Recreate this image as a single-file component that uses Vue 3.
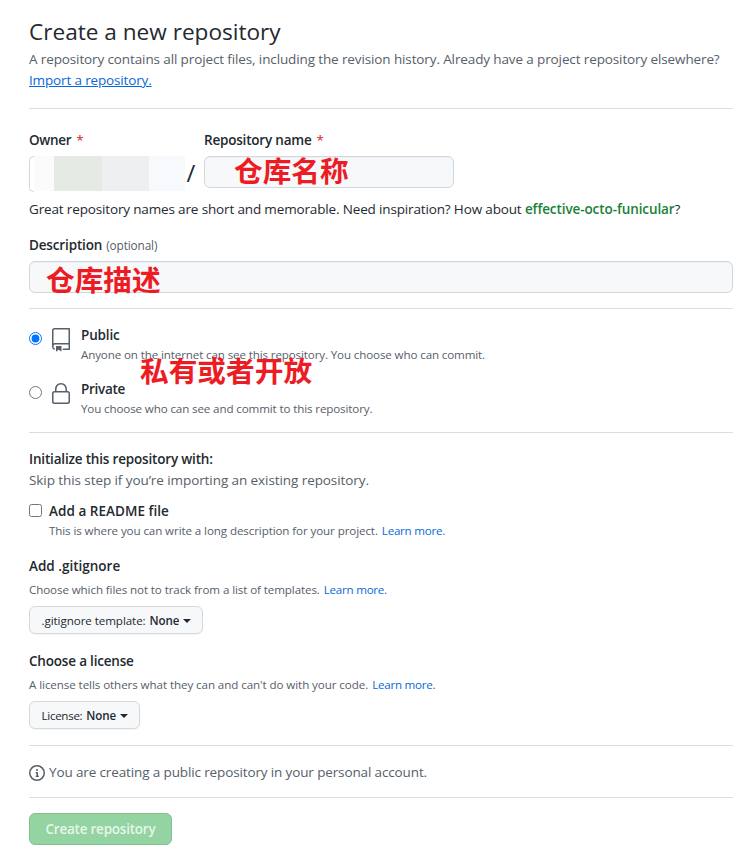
<script setup>
import { ref } from 'vue'

const visibility = ref('public')
const readme = ref(false)
</script>

<template>
  <main class="page">
    <header class="head">
      <h1><span class="t-title">Create a new repository</span></h1>
      <p class="muted"><span class="t-sub">A repository contains all project files, including the revision history. Already have a project repository elsewhere?</span></p>
      <p><a class="underlined t-import" href="#">Import a repository.</a></p>
    </header>

    <section class="names">
      <div class="owner">
        <label class="label"><span class="t-owner">Owner</span><i class="star">*</i></label>
        <div class="owner-box"><b class="m1"></b><b class="m2"></b><b class="m3"></b><b class="m4"></b></div>
      </div>
      <span class="slash">/</span>
      <div class="repo">
        <label class="label"><span class="t-repo">Repository name</span><i class="star">*</i></label>
        <div class="field"><span class="note note-name">仓库名称</span></div>
      </div>
    </section>
    <p class="hint"><span class="t-hint">Great repository names are short and memorable. Need inspiration? How about </span><strong class="green t-green">effective-octo-funicular</strong>?</p>

    <section class="description">
      <label class="label"><span class="t-desc">Description</span><small class="t-opt">(optional)</small></label>
      <div class="field"><span class="note note-desc">仓库描述</span></div>
    </section>

    <section class="visibility">
      <div class="choice">
        <input v-model="visibility" type="radio" value="public" />
        <svg class="icon" width="24" height="24" viewBox="0 0 24 24"><path fill-rule="evenodd" d="M3 2.75A2.75 2.75 0 015.75 0h14.5a.75.75 0 01.75.75v20.5a.75.75 0 01-.75.75h-6a.75.75 0 010-1.5h5.25v-4H6A1.5 1.5 0 004.5 18v.75c0 .716.43 1.334 1.05 1.605a.75.75 0 01-.6 1.374A3.25 3.25 0 013 18.75v-16zM19.5 1.5V15H6c-.546 0-1.059.146-1.5.401V2.75c0-.69.56-1.25 1.25-1.25H19.5z" /><path d="M7 18.25a.25.25 0 01.25-.25h5a.25.25 0 01.25.25v5.01a.25.25 0 01-.397.201l-2.206-1.604a.25.25 0 00-.294 0L7.397 23.46a.25.25 0 01-.397-.2v-5.01z" /></svg>
        <div>
          <div class="label"><span class="t-public">Public</span></div>
          <div class="small"><span class="t-anyone">Anyone on the internet can see this repository. You choose who can commit.</span></div>
        </div>
        <span class="note note-visibility">私有或者开放</span>
      </div>
      <div class="choice">
        <input v-model="visibility" type="radio" value="private" />
        <svg class="icon" width="24" height="24" viewBox="0 0 24 24"><path fill-rule="evenodd" d="M6 9V7.25C6 3.845 8.503 1 12 1s6 2.845 6 6.25V9h.5a2.5 2.5 0 012.5 2.5v8a2.5 2.5 0 01-2.5 2.5h-13A2.5 2.5 0 013 19.5v-8A2.5 2.5 0 015.5 9H6zm1.5-1.75C7.5 4.58 9.422 2.5 12 2.5c2.578 0 4.5 2.08 4.5 4.75V9h-9V7.25zm-3 4.25a1 1 0 011-1h13a1 1 0 011 1v8a1 1 0 01-1 1h-13a1 1 0 01-1-1v-8z" /></svg>
        <div>
          <div class="label"><span class="t-private">Private</span></div>
          <div class="small"><span class="t-choose">You choose who can see and commit to this repository.</span></div>
        </div>
      </div>
    </section>

    <section class="init">
      <div class="label"><span class="t-init">Initialize this repository with:</span></div>
      <p class="muted"><span class="t-skip">Skip this step if you’re importing an existing repository.</span></p>
      <div class="readme">
        <input v-model="readme" type="checkbox" />
        <div>
          <div class="label"><span class="t-readme">Add a README file</span></div>
          <div class="small"><span class="t-where">This is where you can write a long description for your project.</span><a class="learn" href="#">Learn more.</a></div>
        </div>
      </div>
      <div class="label group"><span class="t-git">Add .gitignore</span></div>
      <div class="small"><span class="t-which">Choose which files not to track from a list of templates.</span><a class="learn" href="#">Learn more.</a></div>
      <button class="select select-git"><span class="t-template">.gitignore template:</span><strong>None</strong><i class="caret"></i></button>
      <div class="label group"><span class="t-lic">Choose a license</span></div>
      <div class="small"><span class="t-tells">A license tells others what they can and can't do with your code.</span><a class="learn" href="#">Learn more.</a></div>
      <button class="select select-lic"><span class="t-license">License:</span><strong>None</strong><i class="caret"></i></button>
    </section>

    <section class="info muted">
      <svg class="icon" width="16" height="16" viewBox="0 0 16 16"><path fill-rule="evenodd" d="M8 1.5a6.5 6.5 0 100 13 6.5 6.5 0 000-13zM0 8a8 8 0 1116 0A8 8 0 010 8zm6.5-.25A.75.75 0 017.25 7h1a.75.75 0 01.75.75v2.75h.25a.75.75 0 010 1.5h-2a.75.75 0 010-1.5h.25v-2h-.25a.75.75 0 01-.75-.75zM8 6a1 1 0 100-2 1 1 0 000 2z" /></svg>
      <span class="t-info">You are creating a public repository in your personal account.</span>
    </section>

    <button class="create"><span class="t-create">Create repository</span></button>
  </main>
</template>

<style>
body { margin: 0; background: #fff; overflow: hidden; }
</style>

<style scoped>
* { box-sizing: border-box; }
.page {
  width: 756px; height: 846px; padding: 14px 23px 0 29px; overflow: hidden;
  font-family: "Open Sans", "Noto Sans", "Noto Sans CJK SC", sans-serif;
  font-size: 13.5px; line-height: 21px; color: #24292f; white-space: nowrap;
}
p, h1 { margin: 0; }
a { color: #0969da; text-decoration: none; }
.underlined { text-decoration: underline; }
i { font-style: normal; }
.muted { color: #57606a; }
.head { height: 95px; border-bottom: 1px solid #d8dee4; }
h1 { height: 35px; font-size: 22.6px; line-height: 35px; font-weight: 400; }
.label { display: block; height: 21px; font-weight: 600; }
.names { display: flex; height: 90px; padding-top: 21px; }
.owner { width: 156px; }
.star { margin-left: 5px; color: #cf222e; font-weight: 400; }
.owner-box { display: flex; width: 156px; height: 35px; margin-top: 5px; }
.owner-box::before { content: ""; flex: none; width: 4px; height: 34px; border: 1px solid #d0d7de; border-right: 0; border-radius: 6px 0 0 6px; }
.m1 { width: 20px; background: #fbfbfb; }
.m2 { width: 48px; background: #e5eae5; }
.m3 { width: 48px; background: #eeeff1; }
.m4 { width: 36px; background: #f8f9fc; }
.slash { width: 19px; padding: 31px 0 0 1.5px; font-size: 24px; line-height: 24px; }
.repo { width: 250px; }
.field { position: relative; height: 32px; margin-top: 5px; background: #f6f8fa; border: 1px solid #d0d7de; border-radius: 6px; box-shadow: inset 0 1px 0 rgba(208, 215, 222, .2); }
.note { position: absolute; z-index: 1; color: #ed1c24; font-family: "Noto Sans CJK SC", sans-serif; font-size: 28.7px; line-height: 32px; font-weight: 700; }
.note-name { left: 29px; top: -3px; }
.note-desc { left: 16px; top: 1px; }
.note-visibility { left: 111px; top: 29px; }
.hint { height: 21px; }
.green { color: #1a7f37; font-weight: 600; }
.description { height: 89px; padding-top: 15px; border-bottom: 1px solid #d8dee4; }
small { margin-left: 4px; font-size: 11.8px; color: #57606a; }
.visibility { height: 124px; padding-top: 16px; border-bottom: 1px solid #d8dee4; }
.choice { position: relative; display: flex; height: 54px; }
.choice input { width: 13px; height: 13px; margin: 7px 7px 0 0; }
.choice .icon { width: 24px; margin: 3px 8px 0 0; }
.icon { fill: #57606a; flex: none; }
.small { height: 18px; font-size: 11.6px; line-height: 18px; color: #57606a; }
.learn { margin-left: 4px; letter-spacing: -.25px; }
.init { height: 313px; padding-top: 16px; border-bottom: 1px solid #d8dee4; }
.readme { display: flex; padding-top: 10px; height: 49px; margin-bottom: 16px; }
.readme input { width: 13px; height: 13px; margin: 3px 7px 0 0; }
.group { height: 25px; }
.select { display: flex; align-items: center; height: 28px; margin: 7px 0 17px; padding: 1px 0 0 11.5px; font: 11.6px/18px "Open Sans", sans-serif; color: #24292f; background: #f6f8fa; border: 1px solid #d5d8da; border-radius: 6px; box-shadow: 0 1px 0 rgba(27, 31, 36, .04); }
.select-git { width: 174px; }
.select-lic { width: 111px; }
.select strong { margin-left: 4px; font-weight: 600; letter-spacing: -.1px; }
.caret { margin-left: 4px; border: 4px solid transparent; border-top-color: #24292f; border-bottom: 0; }
.info { display: flex; height: 52px; padding-top: 16px; border-bottom: 1px solid #d8dee4; }
.info .icon { margin: 3px 4px 0 0; }
.create { display: block; width: 143px; height: 32px; margin-top: 15px; padding: 0 0 0 15.5px; text-align: left; font: 600 13.5px/20px "Open Sans", sans-serif; color: rgba(255, 255, 255, .8); background: #94d3a2; border: 1px solid #83c092; border-radius: 6px; }

/* Tracking per text run */
.t-sub { letter-spacing: -.12px; }
.t-import { letter-spacing: -.15px; }
.t-owner { letter-spacing: -.3px; }
.t-repo { letter-spacing: -.2px; }
.t-hint { letter-spacing: -.15px; }
.t-green { letter-spacing: -.09px; }
.t-desc { letter-spacing: -.15px; }
.t-opt { font-weight: 500; letter-spacing: -.12px; }
.t-public { letter-spacing: -.15px; }
.t-private { letter-spacing: -.3px; }
.t-anyone, .t-choose { letter-spacing: -.125px; }
.t-init { letter-spacing: -.18px; }
.t-skip { letter-spacing: -.08px; }
.t-readme { letter-spacing: .04px; }
.t-where, .t-which { letter-spacing: -.1px; }
.t-template { letter-spacing: -.07px; }
.t-lic { letter-spacing: -.19px; }
.t-tells { letter-spacing: -.08px; }
.t-license { letter-spacing: -.3px; }
.t-info { letter-spacing: -.13px; }
.t-create { letter-spacing: -.23px; }
</style>
